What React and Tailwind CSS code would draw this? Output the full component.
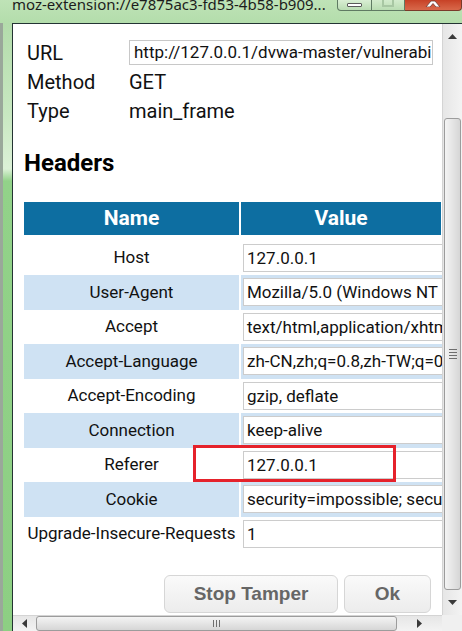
export default function App() {
  const rows = [
    ["Host", "127.0.0.1", false],
    ["User-Agent", "Mozilla/5.0 (Windows NT 6.1; WOW64; rv:50.0) Gecko/20100101 Firefox/50.0", true],
    ["Accept", "text/html,application/xhtml+xml,application/xml;q=0.9,*/*;q=0.8", false],
    ["Accept-Language", "zh-CN,zh;q=0.8,zh-TW;q=0.7,zh-HK;q=0.5,en-US;q=0.3,en;q=0.2", true],
    ["Accept-Encoding", "gzip, deflate", false],
    ["Connection", "keep-alive", true],
    ["Referer", "127.0.0.1", false],
    ["Cookie", "security=impossible; security_level=0; PHPSESSID=abc", true],
    ["Upgrade-Insecure-Requests", "1", false],
  ];

  return (
    <div className="w-[462px] h-[631px] overflow-hidden flex flex-col font-['Roboto',sans-serif] text-[#111]">
      {/* Title bar */}
      <div className="h-[23px] flex items-start bg-gradient-to-b from-[#bfe3b7] to-[#b3ddab]">
        <div className="pl-[12px] text-[15px] leading-[13px] font-['Noto_Sans',sans-serif] text-[#1c1c1c] whitespace-nowrap overflow-hidden w-[325px] -mt-[2px]">
          moz-extension://e7875ac3-fd53-4b58-b909...
        </div>
        <div className="ml-auto flex h-[11px]">
          <div className="w-[35px] h-[11px] border border-t-0 border-[#5f7a63] rounded-bl-[4px] bg-gradient-to-b from-[#d9eed4] to-[#b9dcb2] flex items-center justify-center">
            <div className="w-[15px] h-[4px] bg-white border border-[#5a5a5a] rounded-[1px]" />
          </div>
          <div className="w-[33px] h-[11px] border border-t-0 border-l-0 border-[#5f7a63] bg-gradient-to-b from-[#d3ebcd] to-[#b9dcb2] flex items-start justify-center">
            <div className="w-[12px] h-[7px] border-2 border-t-0 border-[#a8c7a3]" />
          </div>
          <div className="w-[57px] h-[11px] border border-t-0 border-l-0 border-[#7a3a2a] rounded-br-[4px] bg-gradient-to-b from-[#c74126] to-[#d8684a] flex items-start justify-center">
            <svg width="16" height="7" viewBox="0 0 16 7">
              <path d="M1 7 L6 1 L10 1 L15 7 L11 7 L8 3.5 L5 7 Z" fill="#ffffff" stroke="#6b3a33" strokeWidth="0.8" />
            </svg>
          </div>
        </div>
      </div>

      {/* Body */}
      <div className="flex-1 flex min-h-0">
        {/* left frame */}
        <div className="w-[12px] flex">
          <div className="w-[3px] bg-[#9aa89a]" />
          <div className="flex-1 bg-[linear-gradient(to_bottom,#b3dcab_0%,#c8e8c1_15%,#dcf1d7_24%,#92d289_26%,#8dcf83_100%)]" />
        </div>

        <div className="flex-1 flex flex-col border-l border-t border-[#233333] min-w-0">
          <div className="flex-1 flex min-h-0">
            {/* content */}
            <div className="flex-1 bg-white relative overflow-hidden min-w-0">
              <div className="w-[600px]">
                <div className="pt-[14px] grid grid-cols-[116px_auto] text-[20px]">
                  <div className="pl-[14px] h-[29px] flex items-center">URL</div>
                  <div className="h-[29px] flex items-center">
                    <div className="w-[304px] h-[25px] border border-[#c8c8c8] pl-[4px] text-[17px] leading-[23px] overflow-hidden whitespace-nowrap">
                      http://127.0.0.1/dvwa-master/vulnerabilities/csrf/?password_new=123
                    </div>
                  </div>
                  <div className="pl-[14px] h-[29px] flex items-center">Method</div>
                  <div className="h-[29px] flex items-center">GET</div>
                  <div className="pl-[14px] h-[29px] flex items-center">Type</div>
                  <div className="h-[29px] flex items-center">main_frame</div>
                </div>

                <div className="mt-[22px] ml-[11px] h-[32px] leading-[32px] text-[24px] font-bold text-black">Headers</div>

                <div className="mt-[23px] ml-[11px] w-[520px]">
                  <div className="flex h-[33px] gap-[2px] text-white text-[21px] font-bold">
                    <div className="w-[215px] bg-[#0d6ea1] flex items-center justify-center">Name</div>
                    <div className="w-[200px] bg-[#0d6ea1] flex items-center justify-center">Value</div>
                  </div>
                  <div className="mt-[5.5px] text-[17px]">
                    {rows.map(([n, v, blue]) => (
                      <div key={n} className="flex h-[34.5px] gap-[2px]">
                        <div className={`w-[215px] flex items-center justify-center whitespace-nowrap ${blue ? "bg-[#cfe2f3]" : "bg-white"}`}>{n}</div>
                        <div className={`flex-1 flex items-center pl-[2px] ${blue ? "bg-[#cfe2f3]" : "bg-white"}`}>
                          <div className="w-[290px] h-[28px] border border-[#cccccc] bg-white pl-[3px] leading-[26px] whitespace-nowrap overflow-hidden">{v}</div>
                        </div>
                      </div>
                    ))}
                  </div>
                </div>
              </div>

              <div className="w-[429px] flex justify-end gap-[6px] pr-[11px] mt-[24px] font-['Liberation_Sans',sans-serif] font-bold text-[19px] text-[#666666]">
                <div className="w-[174px] h-[38px] rounded-[6px] border border-[#d6d6d6] bg-gradient-to-b from-[#fafafa] to-[#ececec] flex items-center justify-center">Stop Tamper</div>
                <div className="w-[87px] h-[38px] rounded-[6px] border border-[#d6d6d6] bg-gradient-to-b from-[#fafafa] to-[#ececec] flex items-center justify-center">Ok</div>
              </div>

              {/* annotation */}
              <div className="absolute left-[180px] top-[421px] w-[203px] h-[37px] border-[3px] border-[#e5222b]" />
            </div>

            {/* vertical scrollbar */}
            <div className="w-[20px] flex flex-col border-l border-[#d4d4d4] bg-[linear-gradient(to_right,#e6e6e6,#f3f3f3)]">
              <div className="h-[24px] flex items-center justify-center">
                <svg width="9" height="5" viewBox="0 0 9 5"><path d="M0 5 L4.5 0 L9 5 Z" fill="#3a3a3a" /></svg>
              </div>
              <div className="h-[70px]" />
              <div className="h-[472px] mx-[1px] rounded-[3px] border border-[#9c9c9c] bg-[linear-gradient(to_right,#f4f4f4,#e2e2e2_60%,#d6d6d6)] flex items-center justify-center">
                <div className="flex flex-col gap-[2px]">
                  <div className="w-[8px] h-[1px] bg-[#6e6e6e]" />
                  <div className="w-[8px] h-[1px] bg-[#6e6e6e]" />
                  <div className="w-[8px] h-[1px] bg-[#6e6e6e]" />
                  <div className="w-[8px] h-[1px] bg-[#6e6e6e]" />
                </div>
              </div>
              <div className="flex-1 flex items-center justify-center">
                <svg width="9" height="5" viewBox="0 0 9 5"><path d="M0 0 L9 0 L4.5 5 Z" fill="#3a3a3a" /></svg>
              </div>
            </div>
          </div>

          {/* horizontal scrollbar */}
          <div className="h-[16px] flex">
            <div className="flex-1 flex items-center border-t border-[#d4d4d4] bg-[linear-gradient(to_bottom,#e6e6e6,#f3f3f3)]">
              <div className="w-[22px] flex items-center justify-center">
                <svg width="5" height="9" viewBox="0 0 5 9"><path d="M5 0 L0 4.5 L5 9 Z" fill="#3a3a3a" /></svg>
              </div>
              <div className="ml-[1px] w-[361px] h-[15px] rounded-[3px] border border-[#9c9c9c] bg-[linear-gradient(to_bottom,#f4f4f4,#e2e2e2_60%,#d6d6d6)] flex items-center justify-center">
                <div className="flex gap-[2px]">
                  <div className="w-[1px] h-[7px] bg-[#6e6e6e]" />
                  <div className="w-[1px] h-[7px] bg-[#6e6e6e]" />
                  <div className="w-[1px] h-[7px] bg-[#6e6e6e]" />
                </div>
              </div>
              <div className="flex-1 flex items-center justify-center">
                <svg width="5" height="9" viewBox="0 0 5 9"><path d="M0 0 L5 4.5 L0 9 Z" fill="#3a3a3a" /></svg>
              </div>
            </div>
            <div className="w-[20px] bg-[#f0f0f0]" />
          </div>
        </div>
      </div>
    </div>
  );
}
